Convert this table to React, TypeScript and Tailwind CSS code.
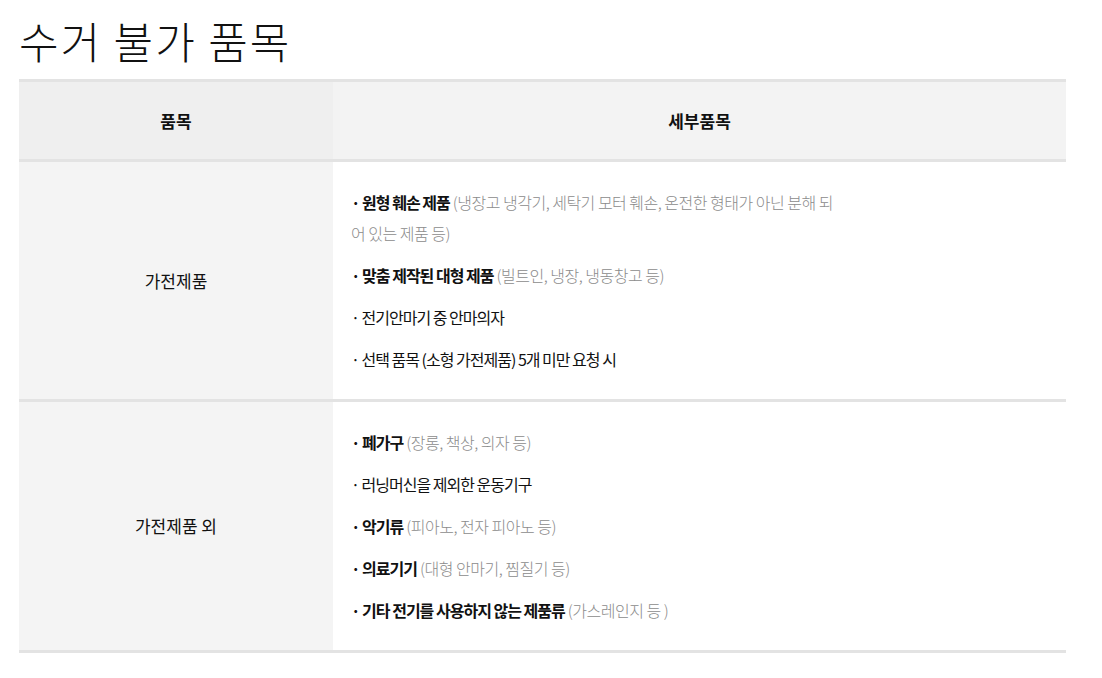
const font = { fontFamily: '"Noto Sans CJK KR", "Noto Sans", sans-serif' };

type Item = { main: string; note?: string; bold?: boolean };

const rows: { name: string; items: Item[] }[] = [
  {
    name: "가전제품",
    items: [
      {
        main: "원형 훼손 제품",
        note: "(냉장고 냉각기, 세탁기 모터 훼손, 온전한 형태가 아닌 분해 되어 있는 제품 등)",
        bold: true,
      },
      { main: "맞춤 제작된 대형 제품", note: "(빌트인, 냉장, 냉동창고 등)", bold: true },
      { main: "전기안마기 중 안마의자" },
      { main: "선택 품목 (소형 가전제품) 5개 미만 요청 시" },
    ],
  },
  {
    name: "가전제품 외",
    items: [
      { main: "폐가구", note: "(장롱, 책상, 의자 등)", bold: true },
      { main: "러닝머신을 제외한 운동기구" },
      { main: "악기류", note: "(피아노, 전자 피아노 등)", bold: true },
      { main: "의료기기", note: "(대형 안마기, 찜질기 등)", bold: true },
      { main: "기타 전기를 사용하지 않는 제품류", note: "(가스레인지 등 )", bold: true },
    ],
  },
];

export default function App() {
  return (
    <div className="min-h-[678px] bg-white pl-[19px] pr-[36px] pt-[12px] text-[#111]" style={font}>
      <h1 className="text-[43px] font-light leading-[56px] tracking-[2px] text-[#111]">
        수거 불가 품목
      </h1>
      <div className="mt-[11px] border-t-[3px] border-[#e3e3e3]">
        <div className="flex h-[80px] border-b-[3px] border-[#e3e3e3] text-[17px] font-bold">
          <div className="flex w-[314px] items-center justify-center bg-[#efefef]">품목</div>
          <div className="flex flex-1 items-center justify-center bg-[#f3f3f3]">세부품목</div>
        </div>
        {rows.map((row) => (
          <div key={row.name} className="flex border-b-[3px] border-[#e3e3e3]">
            <div className="flex w-[314px] items-center justify-center bg-[#f4f4f4] text-[17px]">
              {row.name}
            </div>
            <div className="flex-1 pl-[18px] pt-[25px] pb-[24px]">
              <ul className="flex w-[492px] flex-col gap-[11px] text-[16px] leading-[31px] tracking-[-1px]">
                {row.items.map((it, i) => (
                  <li key={i}>
                    <span className={it.bold ? "font-bold" : ""}>·&nbsp;{it.main}</span>
                    {it.note && (
                      <span className="font-light tracking-[-0.5px] text-[#8c8c8c]"> {it.note}</span>
                    )}
                  </li>
                ))}
              </ul>
            </div>
          </div>
        ))}
      </div>
    </div>
  );
}
